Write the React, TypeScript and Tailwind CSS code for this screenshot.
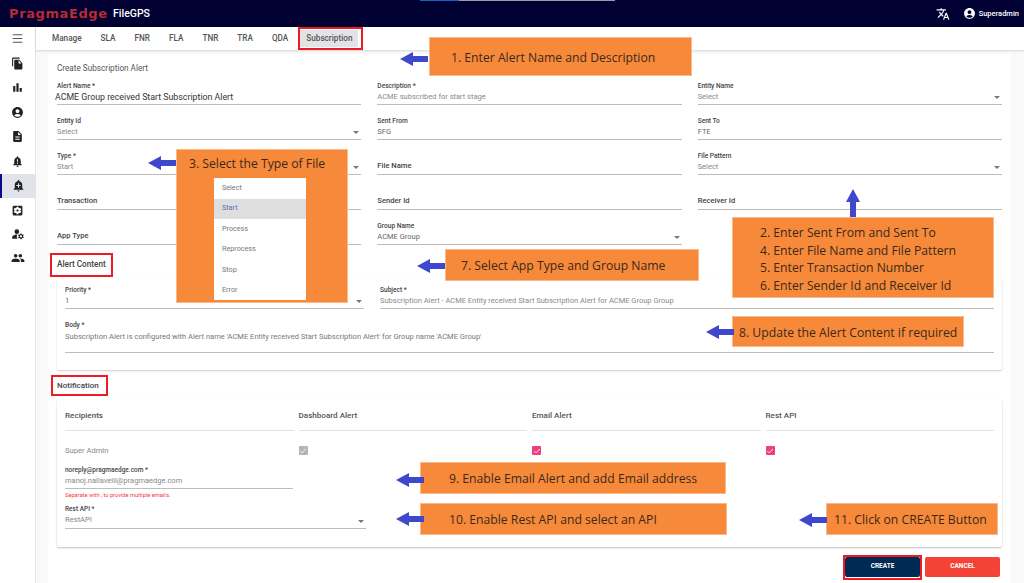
import React from "react";
import { Menu } from "lucide-react";
import { MdFileCopy, MdBarChart, MdAccountCircle, MdDescription, MdNotificationImportant, MdAddAlert, MdSettingsApplications, MdPeople, MdTranslate, MdCheck, MdManageAccounts } from "react-icons/md";

const Caret = () => (
  <svg width="6" height="3" viewBox="0 0 6 3" className="absolute right-[2px] bottom-[6px]"><path d="M0 0h6L3 3z" fill="#777" /></svg>
);

function Field({ label, value, select, big, strong, dark }: { label?: string; value?: string; select?: boolean; big?: boolean; strong?: string; dark?: boolean }) {
  return (
    <div className="relative h-[35px] flex flex-col justify-end">
      {label && <div className="text-[6.6px] leading-[9px] font-medium text-[#444]">{label}</div>}
      {strong ? (
        <div className="text-[7.6px] leading-[12px] pb-[2px] font-medium text-[#444]">{strong}</div>
      ) : (
        <div className={`${big ? "text-[8.8px] text-[#333] -ml-[2px]" : dark ? "text-[7.5px] text-[#666]" : "text-[7.5px] text-[#8a8a8a]"} leading-[12px] pb-[1px]`}>{value}</div>
      )}
      <div className="h-px bg-[#bdbdbd]" />
      {select && <Caret />}
    </div>
  );
}

const Callout = ({ className, text }: { className: string; text: string }) => (
  <div className={`absolute bg-[#f7893b] border border-[#fbb98a] text-[#3a2a1a] font-['Open_Sans',sans-serif] text-[12.2px] flex items-center pt-[3px] ${className}`}>{text}</div>
);

const Arrow = ({ className, up }: { className: string; up?: boolean }) => (
  <svg width="28" height="16" viewBox="0 0 28 16" className={`absolute ${className} ${up ? "rotate-90" : ""}`}>
    <path d="M0 8 L13 1 V5 H28 V11 H13 V15 Z" fill="#3f48cc" />
  </svg>
);

const Red = ({ className }: { className: string }) => <div className={`absolute border-[2px] border-[#ed1c24] ${className}`} />;

const Check = ({ c }: { c: string }) => (
  <div className={`w-[9px] h-[9px] rounded-[1px] flex items-center justify-center ${c}`}><MdCheck className="text-white" size={8} /></div>
);

const tabs = ["Manage", "SLA", "FNR", "FLA", "TNR", "TRA", "QDA"];
const sideIcons = [MdFileCopy, MdBarChart, MdAccountCircle, MdDescription, MdNotificationImportant];

export default function App() {
  return (
    <div className="relative w-[1024px] h-[583px] overflow-hidden bg-[#f9f9f9] font-['Roboto',sans-serif]">
      <header className="relative h-[27px] bg-[#000033] flex items-center pl-[9px] pr-[5px]">
        <div className="absolute left-[420px] top-0 w-[39px] h-px bg-[#1565c0]" />
        <div className="absolute left-[459px] top-0 w-[156px] h-px bg-[#9a9aa5]" />
        <span className="w-[101px] text-[#b92b30] text-[13px] font-bold tracking-[0.6px] whitespace-nowrap font-['DejaVu_Sans',sans-serif]">PragmaEdge</span>
        <span className="text-white text-[10.5px] font-medium ml-[3px]">FileGPS</span>
        <div className="ml-auto flex items-center text-white">
          <MdTranslate size={14} className="mr-[13px]" />
          <MdAccountCircle size={13} className="mr-[3px]" />
          <span className="text-[7.5px] font-medium">Superadmin</span>
        </div>
      </header>

      <div className="flex h-[556px]">
        <aside className="w-[36px] bg-white border-r border-[#e4e4e4] flex flex-col items-center pt-[5px] shrink-0">
          <Menu size={13} className="text-[#555] mb-[6px]" />
          {sideIcons.map((I, i) => (
            <div key={i} className="h-[24.5px] w-full flex items-center justify-center"><I size={13} className="text-[#222]" /></div>
          ))}
          <div className="h-[24.5px] w-full flex items-center justify-center bg-[#e2e3ea] border-l-2 border-[#0a0a8c]"><MdAddAlert size={13} className="text-[#222]" /></div>
          <div className="h-[24px] w-full flex items-center justify-center"><MdSettingsApplications size={13} className="text-[#222]" /></div>
          <div className="h-[24px] w-full flex items-center justify-center"><MdManageAccounts size={14} className="text-[#222]" /></div>
          <div className="h-[24px] w-full flex items-center justify-center"><MdPeople size={14} className="text-[#222]" /></div>
        </aside>

        <main className="flex-1 min-w-0">
          <nav className="h-[23px] bg-white shadow-[0_1px_2px_rgba(0,0,0,0.15)] flex items-center pl-[16px] text-[8.2px] font-medium text-[#555]">
            {tabs.map((t) => (
              <span key={t} className="mr-[19px]">{t}</span>
            ))}
            <span className="bg-[#e3e3e6] h-[17px] -ml-[7px] px-[6px] flex items-center">Subscription</span>
          </nav>

          <section className="ml-[12px] mr-[13px] mt-[4px] h-[529px] bg-white px-[9px] pt-[8px]">
            <div className="text-[8.2px] text-[#555] leading-[12px]">Create Subscription Alert</div>
            <div className="grid grid-cols-3 gap-x-[16px] -mt-[4px]">
              <Field label="Alert Name *" value="ACME Group received Start Subscription Alert" big />
              <Field label="Description *" value="ACME subscribed for start stage" />
              <Field label="Entity Name" value="Select" select />
              <Field label="Entity Id" value="Select" select />
              <Field label="Sent From" value="SFG" dark />
              <Field label="Sent To" value="FTE" dark />
              <Field label="Type *" value="Start" select />
              <Field strong="File Name" />
              <Field label="File Pattern" value="Select" select />
              <Field strong="Transaction" />
              <Field strong="Sender Id" />
              <Field strong="Receiver Id" />
              <Field strong="App Type" />
              <Field label="Group Name" value="ACME Group" select dark />
              <div />
            </div>

            <div className="text-[8.2px] font-medium text-[#444] mt-[13px] leading-[12px]">Alert Content</div>
            <div className="mt-[8px] h-[92px] rounded-[2px] shadow-[0_1px_2px_rgba(0,0,0,0.2)] px-[8px] flex flex-col">
              <div className="grid grid-cols-[299px_1fr] gap-x-[16px] -mt-[4px]">
                <Field label="Priority *" value="1" select dark />
                <Field label="Subject *" value="Subscription Alert - ACME Entity received Start Subscription Alert for ACME Group Group" />
              </div>
              <div className="relative mt-[12px]">
                <div className="text-[6.6px] leading-[9px] font-medium text-[#444]">Body *</div>
                <div className="text-[7.55px] leading-[12px] text-[#777] h-[22px] pt-[1px]">Subscription Alert is configured with Alert name 'ACME Entity received Start Subscription Alert' for Group name 'ACME Group'</div>
                <div className="h-px bg-[#bdbdbd]" />
              </div>
            </div>

            <div className="text-[8px] font-medium text-[#444] mt-[10px] leading-[12px]">Notification</div>
            <div className="mt-[8px] h-[147px] rounded-[2px] shadow-[0_1px_2px_rgba(0,0,0,0.25)] px-[8px]">
              <div className="grid grid-cols-4 gap-x-[5px] text-[8.1px] font-medium text-[#555]">
                {["Recipients", "Dashboard Alert", "Email Alert", "Rest API"].map((h) => (
                  <div key={h} className="h-[31px] border-b border-[#e3e3e3] pt-[9px] leading-[12px]">{h}</div>
                ))}
              </div>
              <div className="grid grid-cols-4 gap-x-[5px] h-[35px] pt-[4px] items-center text-[7.6px] text-[#888]">
                <span>Super Admin</span>
                <Check c="bg-[#b5b5b5]" />
                <Check c="bg-[#ef3f7f]" />
                <Check c="bg-[#ef3f7f]" />
              </div>
              <div className="w-[228px]">
                <div className="text-[6.5px] leading-[9px] font-medium text-[#444]">noreply@pragmaedge.com *</div>
                <div className="text-[7.5px] leading-[12px] text-[#888] pb-[1px]">manoj.nallavelli@pragmaedge.com</div>
                <div className="h-px bg-[#bdbdbd]" />
                <div className="text-[5.7px] text-[#f5384a] leading-[8px] mt-[2px]">Separate with , to provide multiple email's.</div>
              </div>
              <div className="relative w-[301px] mt-[5.5px]">
                <div className="text-[6.5px] leading-[9px] font-medium text-[#444]">Rest API *</div>
                <div className="text-[7.6px] leading-[12px] text-[#888] pb-[2px]">RestAPI</div>
                <div className="h-px bg-[#bdbdbd]" />
                <Caret />
              </div>
            </div>

            <div className="flex justify-end gap-[5px] mt-[10px] pr-[2px]">
              <button className="w-[75px] h-[20px] rounded-[2px] bg-[#002a54] text-white text-[6.5px] font-bold">CREATE</button>
              <button className="w-[75px] h-[20px] rounded-[2px] bg-[#f44336] text-white text-[6.5px] font-bold">CANCEL</button>
            </div>
          </section>
        </main>
      </div>

      <Red className="left-[298px] top-[27px] w-[65px] h-[23px]" />
      <Red className="left-[50px] top-[253px] w-[63px] h-[24px]" />
      <Red className="left-[51px] top-[375px] w-[57px] h-[21px]" />
      <Red className="left-[843px] top-[555px] w-[79px] h-[25px]" />

      <Callout className="left-[429px] top-[37px] w-[263px] h-[39px] pl-[21px]" text="1. Enter Alert Name and Description" />
      <Arrow className="left-[400px] top-[51px]" />
      <div className="absolute left-[176px] top-[149px] w-[172px] h-[154px] bg-[#f7893b] border border-[#fbb98a] font-['Open_Sans',sans-serif] text-[12.2px] text-[#3a2a1a] pl-[12px] pt-[5px]">3. Select the Type of File</div>
      <Arrow className="left-[148px] top-[155px]" />
      <div className="absolute left-[214px] top-[178px] w-[92px] h-[122px] bg-white text-[7.2px] text-[#777]">
        {["Select", "Start", "Process", "Reprocess", "Stop", "Error"].map((o) => (
          <div key={o} className={`h-[20.5px] flex items-center pl-[8px] ${o === "Start" ? "bg-[#dedede] text-[#5c6bc0]" : ""}`}>{o}</div>
        ))}
      </div>

      <div className="absolute left-[732px] top-[217px] w-[262px] h-[81px] bg-[#f7893b] border border-[#fbb98a] font-['Open_Sans',sans-serif] text-[12.2px] text-[#3a2a1a] leading-[17.5px] pl-[27px] pt-[6px]">
        <div>2. Enter Sent From and Sent To</div>
        <div>4. Enter File Name and File Pattern</div>
        <div>5. Enter Transaction Number</div>
        <div>6. Enter Sender Id and Receiver Id</div>
      </div>
      <Arrow up className="left-[839px] top-[195px]" />

      <Callout className="left-[445px] top-[249px] w-[254px] h-[32px] pl-[15px]" text="7. Select App Type and Group Name" />
      <Arrow className="left-[417px] top-[258px]" />
      <Callout className="left-[732px] top-[316px] w-[232px] h-[31px] pl-[6px]" text="8. Update the Alert Content if required" />
      <Arrow className="left-[706px] top-[324px]" />
      <Callout className="left-[420px] top-[462px] w-[306px] h-[32px] pl-[28px]" text="9. Enable Email Alert and add Email address" />
      <Arrow className="left-[396px] top-[472px]" />
      <Callout className="left-[420px] top-[503px] w-[307px] h-[32px] pl-[28px]" text="10. Enable Rest API and select an API" />
      <Arrow className="left-[396px] top-[511px]" />
      <Callout className="left-[826px] top-[503px] w-[172px] h-[32px] pl-[7px]" text="11. Click on CREATE Button" />
      <Arrow className="left-[799px] top-[512px]" />
    </div>
  );
}
